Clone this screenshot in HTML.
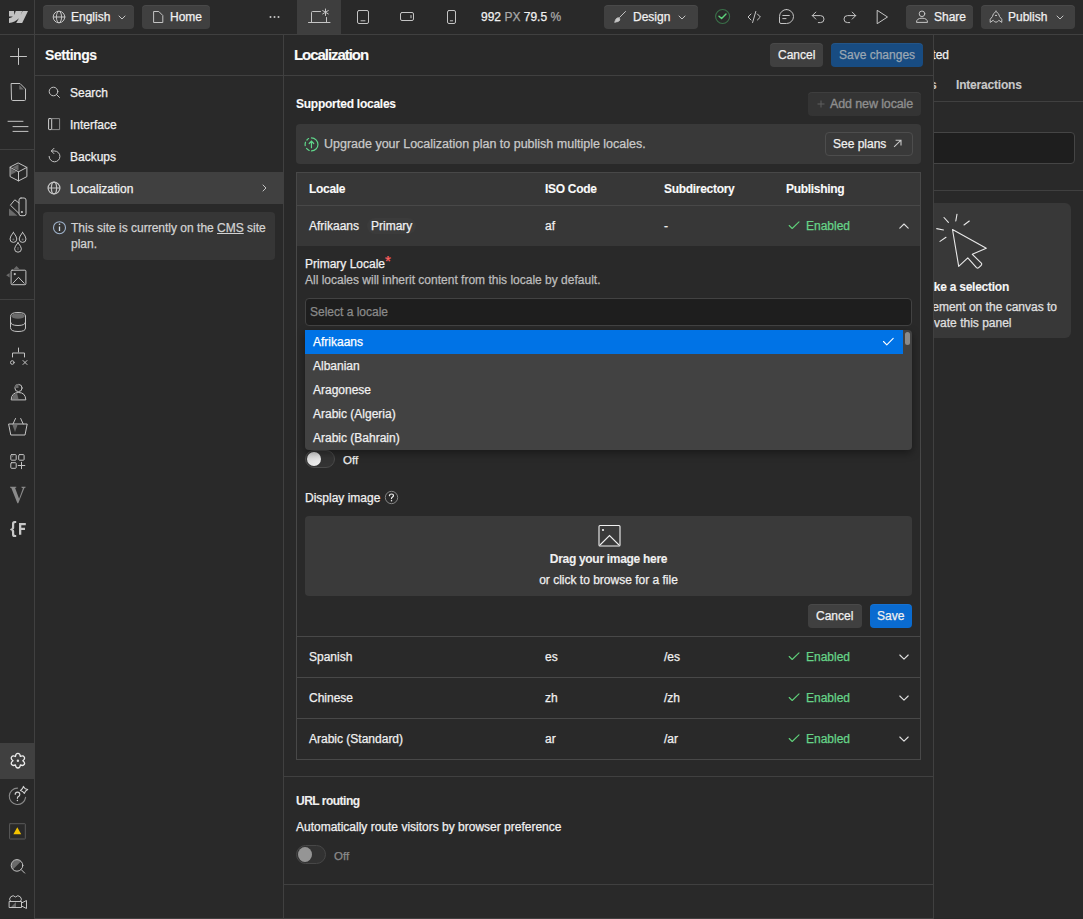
<!DOCTYPE html>
<html><head><meta charset="utf-8">
<style>
*{box-sizing:border-box;margin:0;padding:0}
html,body{width:1083px;height:919px;overflow:hidden;background:#292929;font-family:"Liberation Sans",sans-serif;font-size:12px;color:#f0f0f0}
.a{position:absolute}
svg{position:absolute;overflow:visible}
.ic{fill:none;stroke:#c4c4c4;stroke-width:1;stroke-linecap:round;stroke-linejoin:round}
.t{position:absolute;white-space:nowrap;line-height:16px;-webkit-text-stroke:0.25px currentColor}
.t.b{-webkit-text-stroke:0.1px currentColor}
.b{font-weight:bold}
.hl{background:#3a3a3a}
.btn{position:absolute;border-radius:4px;background:#404040;box-shadow:inset 0 1px 0 rgba(255,255,255,0.05)}
</style></head><body>
<!-- TOP BAR -->
<div class="a" style="left:0;top:0;width:1083px;height:34px;background:#292929"></div>
<div class="a" style="left:0;top:34px;width:1083px;height:1px;background:#404040"></div>
<div class="a" style="left:34px;top:0;width:1px;height:919px;background:#404040"></div>


<!-- TOPBAR CONTENT -->
<svg style="left:9px;top:11px" width="19" height="12" viewBox="0 0 19 12"><path fill="#c2c2c2" d="M0,0 H5 L5.4,3.9 L6.7,0 H13.2 L11.7,3.9 L13.6,0 H19 L13.2,12 H7.2 L10,7.2 Q6,11.3 0,12 V7.2 Q2.6,6.6 3.9,5.4 H0 Z"/></svg>
<div class="btn" style="left:43px;top:5px;width:91px;height:24px"></div>
<svg style="left:0;top:0" width="1" height="1"><g class="ic" stroke="#c8c8c8"><circle cx="59" cy="17" r="5.8"/><ellipse cx="59" cy="17" rx="2.6" ry="5.8"/><path d="M53.5,17 H64.5"/><path d="M119,16 L122,19 L125,16"/></g></svg>
<div class="t" style="left:71px;top:9px">English</div>
<div class="btn" style="left:142px;top:5px;width:68px;height:24px"></div>
<svg style="left:0;top:0" width="1" height="1"><g class="ic" stroke="#c8c8c8"><path d="M154,11.5 H158.8 L162.8,15.5 V22.5 H154 Z"/></g></svg>
<div class="t" style="left:170px;top:9px">Home</div>
<svg style="left:0;top:0" width="1" height="1"><g fill="#c8c8c8"><circle cx="270.5" cy="17" r="1"/><circle cx="274.5" cy="17" r="1"/><circle cx="278.5" cy="17" r="1"/></g></svg>
<div class="a" style="left:297px;top:0;width:44px;height:34px;background:#3e3e3e"></div>
<svg style="left:0;top:0" width="1" height="1"><g class="ic" stroke="#f0f0f0" stroke-width="1.1">
<path d="M308.5,22.5 H330"/><path d="M311.5,22.5 V12.5 Q311.5,11.5 312.5,11.5 H320.5"/><path d="M326.5,17.5 V22.5"/>
<path d="M325.5,9 V15.5 M322.7,10.6 L328.3,13.9 M322.7,13.9 L328.3,10.6"/></g>
<g class="ic" stroke="#c4c4c4" stroke-width="1.1"><rect x="357.5" y="10.5" width="11" height="13" rx="1.5"/><path d="M361,20.8 H365"/>
<rect x="400.5" y="12.5" width="13" height="8" rx="1.5"/><path d="M411,15.5 V17.8"/>
<rect x="447.5" y="10.5" width="8" height="13" rx="1.5"/><path d="M450.3,20.8 H452.7"/></g></svg>
<div class="t" style="left:481px;top:9px;font-size:12px"><span style="color:#f0f0f0">992</span> <span style="color:#a8a8a8">PX</span> <span style="color:#f0f0f0">79.5</span> <span style="color:#a8a8a8">%</span></div>
<div class="btn" style="left:604px;top:5px;width:94px;height:24px"></div>
<svg style="left:0;top:0" width="1" height="1"><g class="ic" stroke="#c8c8c8" stroke-width="1.2"><path d="M625.5,11.5 L619.5,17.5"/><path d="M615,22 Q615.5,18 618.5,17.8 Q620.5,18.5 619.5,20.5 Q618,22 615,22 Z" fill="#c8c8c8"/>
<path d="M679,16 L682,19 L685,16"/></g></svg>
<div class="t" style="left:633px;top:9px">Design</div>
<svg style="left:0;top:0" width="1" height="1"><circle cx="722.6" cy="16.5" r="7" fill="none" stroke="#3a7049" stroke-width="1.1"/><path d="M719,16.2 L721.6,18.6 L726,14" fill="none" stroke="#5ed47c" stroke-width="1.4" stroke-linecap="round" stroke-linejoin="round"/>
<g class="ic" stroke="#c4c4c4" stroke-width="1.1"><path d="M751,14 L748,17 L751,20"/><path d="M755.8,11.5 L752.6,22.5"/><path d="M757.4,14 L760.4,17 L757.4,20"/>
<path d="M786.5,9.5 A7,7 0 1 1 786.5,23.5 H781 Q779.5,23.5 779.5,22 V16.5 A7,7 0 0 1 786.5,9.5 Z"/><path d="M782.8,15.5 H789.3 M782.8,18.6 H786"/>
<path d="M812.3,15.6 H820.5 A3.5,3.5 0 0 1 820.5,22.6 H818.3 M815.8,12.1 L812.3,15.6 L815.8,19.1"/>
<path d="M855.7,15.6 H847.5 A3.5,3.5 0 0 0 847.5,22.6 H849.7 M852.2,12.1 L855.7,15.6 L852.2,19.1"/>
<path d="M877.5,10.5 L887.5,17 L877.5,23.5 Z"/></g></svg>
<div class="btn" style="left:906px;top:5px;width:67px;height:24px"></div>
<div class="btn" style="left:981px;top:5px;width:94px;height:24px"></div>
<svg style="left:0;top:0" width="1" height="1"><g class="ic" stroke="#c8c8c8" stroke-width="1.1"><circle cx="922" cy="13.8" r="2.8"/><path d="M916.5,22 Q916.5,18.2 922,18.2 Q927.5,18.2 927.5,22 Z"/>
<path d="M996,11.4 Q999.4,13.6 999.6,16.6 L1001.8,19.3 V22.4 L998.8,20.3 Q997.6,22.2 996,22.2 Q994.4,22.2 993.2,20.3 L990.2,22.4 V19.3 L992.4,16.6 Q992.6,13.6 996,11.4 Z"/><ellipse cx="996" cy="15.4" rx="1" ry="0.6" fill="#d0d0d0" stroke="none"/>
<path d="M1057,16 L1060,19 L1063,16"/></g></svg>
<div class="t" style="left:934px;top:9px">Share</div>
<div class="t" style="left:1008px;top:9px">Publish</div>

<!-- SETTINGS PANEL -->
<div class="a" style="left:35px;top:35px;width:248px;height:884px;background:#292929"></div>
<div class="a" style="left:283px;top:35px;width:1px;height:884px;background:#404040"></div>
<div class="a" style="left:35px;top:75px;width:248px;height:1px;background:#404040"></div>


<!-- RAIL -->
<div class="a" style="left:0;top:149px;width:34px;height:1px;background:#404040"></div>
<div class="a" style="left:0;top:299px;width:34px;height:1px;background:#404040"></div>
<div class="a" style="left:0;top:743px;width:34px;height:36px;background:#404040"></div>
<svg style="left:0;top:0" width="1" height="1"><g class="ic" stroke="#c8c8c8" stroke-width="1.1">
<path d="M18.5,48.5 V64.5 M10.5,56.5 H26.5"/>
<path d="M11.5,83.5 H20 L25.5,89 V99.5 Q25.5,100.5 24.5,100.5 H12.5 Q11.5,100.5 11.5,99.5 Z"/>
<path d="M8,121.3 H23 M13,126.6 H28 M13,131.4 H28"/>
<path d="M18.5,163.1 L26.9,167.4 V176.6 L18.5,180.9 L10.1,176.6 V167.4 Z M10.1,167.4 L18.5,171.8 L26.9,167.4 M18.5,171.8 V180.9"/>
<rect x="19" y="198" width="7" height="17.7" rx="2"/><path d="M19,203 L14.8,199.8 L10.4,205.2 L19,213.5"/>
<path d="M13.4,232.4 Q10,236.5 10,239 A3.4,3.4 0 0 0 16.8,239 Q16.8,236.5 13.4,232.4 Z"/>
<path d="M22.6,232.4 Q19.2,236.5 19.2,239 A3.4,3.4 0 0 0 26,239 Q26,236.5 22.6,232.4 Z"/>
<path d="M18,242.7 Q14.6,246.8 14.6,248.8 A3.4,3.4 0 0 0 21.4,248.8 Q21.4,246.8 18,242.7 Z"/>
<rect x="11.1" y="270.2" width="14.8" height="14.5" rx="1"/><path d="M12.8,283.3 L18.5,277.3 L24.2,283.3"/>
<path d="M10.5,316 Q10.5,312.5 18,312.5 Q25.5,312.5 25.5,316 V328 Q25.5,331.5 18,331.5 Q10.5,331.5 10.5,328 Z M10.5,322 Q10.5,325.5 18,325.5 Q25.5,325.5 25.5,322"/>
<path d="M18.5,348 V352 M12.5,357 V353 H24.5 V357"/><circle cx="12.3" cy="362.5" r="1.8"/><path d="M23,360.5 L27,364.5 M27,360.5 L23,364.5"/>
<circle cx="18.5" cy="388" r="3.6"/><path d="M11.2,399.5 Q11.5,392.5 18.5,392.5 Q25.5,392.5 25.8,399.5 Z"/>
<path d="M9,424 H27.2 L25,435 H11.2 Z M13,424 L15.5,418.5 M23.2,424 L20.7,418.5"/>
<rect x="10.8" y="454.6" width="5.4" height="5.6" rx="0.8"/><rect x="18.7" y="454.6" width="5.4" height="5.6" rx="0.8"/><rect x="10.8" y="462.7" width="5.4" height="5.6" rx="0.8"/><path d="M21.5,462.3 V468.7 M18.2,465.5 H24.8"/>
<circle cx="17.9" cy="760.7" r="1.2" stroke-width="0" fill="#e0e0e0"/>
<path d="M15.45,756.46 C15.82,752.36 19.98,752.36 20.35,756.46 C24.09,754.73 26.17,758.33 22.80,760.70 C26.17,763.07 24.09,766.67 20.35,764.94 C19.98,769.04 15.82,769.04 15.45,764.94 C11.71,766.67 9.63,763.07 13.00,760.70 C9.63,758.33 11.71,754.73 15.45,756.46 Z" stroke-width="1.3" stroke="#ececec"/>
<path d="M17.6,788.1 A8.2,8.2 0 1 0 25.6,797.4" stroke="#8a8a8a" stroke-width="1.1"/><path d="M15.2,794.3 Q15.3,792.2 17.5,792.2 Q19.8,792.2 19.8,794.4 Q19.8,795.8 18.3,796.6 Q17.4,797.2 17.4,798.3" stroke="#d0d0d0" stroke-width="1.2"/><circle cx="17.4" cy="800.5" r="0.7" fill="#d0d0d0" stroke="none"/><path d="M23.4,786.4 Q24.6,789 27.7,789.6 Q25,790.9 24.4,793.5 Q23.1,791.1 20.4,790.5 Q22.9,789.3 23.4,786.4 Z" stroke="#d0d0d0" stroke-width="1.1"/>
<rect x="9.6" y="823.7" width="15.7" height="15.3" rx="0.5" stroke="#5a5a5a"/>
<path d="M12.9,869.5 A5.8,5.8 0 0 1 21.1,861.3 Z" fill="#6a6a6a" stroke="none"/><circle cx="17" cy="865.4" r="5.8"/><path d="M21.2,869.6 L24.7,873.1"/>
<path d="M10.5,907.5 L16,902 V907.5 Z" fill="#6a6a6a" stroke="none"/><path d="M9.5,901.5 H21.5 V907.5 H9.5 Z M21.5,903 L26.5,900.5 V908.5 L21.5,906 M10.5,901.5 A2.8,2.8 0 0 1 15.5,897 A2.8,2.8 0 0 1 20.5,901.5"/>
</g>
<g fill="#6a6a6a" stroke="none">
<path d="M19.3,85 L23.8,89.6 H19.3 Z"/>
<path d="M18.5,164.3 L18.5,170.6 L12.2,167.4 Z"/><path d="M11,168.8 L16.5,171.8 L11,174.8 Z"/>
<path d="M9,208.5 V215.7 H17.5 Z"/>
<path d="M9.6,273 L6.2,275.2 L9.6,277.5 Z"/><path d="M13.5,269.3 L16.5,266 L19.5,269.3 Z"/>
<ellipse cx="18" cy="316" rx="6.8" ry="2.8"/>
<path d="M14.5,388 A4,4 0 0 1 18.5,384 V388 Z"/><path d="M12,399 Q12.5,394 17,393 L18.5,399 Z"/>
<path d="M12.5,425 H17.5 L15,432 Z"/>
<path d="M11.8,455.6 H14 L11.8,457.8 Z"/>
<circle cx="13.4" cy="239.5" r="1"/><circle cx="22.6" cy="239.5" r="1"/><rect x="17.5" y="247" width="1" height="3"/>
</g>
<circle cx="21.9" cy="212" r="1.1" fill="#c8c8c8"/>
<circle cx="14.8" cy="274.1" r="1.1" fill="#c8c8c8"/>
<path d="M17.3,827.2 L21.2,834.3 H13.4 Z" fill="#f5c400"/>
<path d="M10,486.7 H16.3 V487.6 L15.1,487.9 L19.1,498.8 L22.9,488.2 L21.4,487.6 V486.7 H25.6 V487.4 L24.4,488 L18.3,503.3 H17.4 L11.3,488 L10,487.4 Z" fill="#8a8a8a"/>
<path d="M19,523 H25.8 V525.2 H21.3 V527.7 H25 V529.9 H21.3 V534.8 H19 Z" fill="#c8c8c8"/><path d="M16.2,521 H14.6 Q12,521 12,523.6 V527.3 Q12,528.9 10.2,529.1 V530.1 Q12,530.3 12,531.9 V534.4 Q12,537 14.6,537 H16.2 V535.1 H15.2 Q14.2,535.1 14.2,534 V531.2 Q14.2,529.9 12.9,529.6 Q14.2,529.3 14.2,528 V524 Q14.2,522.9 15.2,522.9 H16.2 Z" fill="#c8c8c8"/>
</svg>

<!-- SETTINGS CONTENT -->
<div class="t b" style="left:45px;top:47px;font-size:14px;letter-spacing:-0.45px;color:#fafafa">Settings</div>
<div class="a" style="left:35px;top:172px;width:248px;height:32px;background:#404040"></div>
<svg style="left:0;top:0" width="1" height="1"><g class="ic" stroke="#c4c4c4" stroke-width="1.1">
<circle cx="53.5" cy="91.5" r="4.3"/><path d="M56.6,94.6 L59.5,97.5"/>
<rect x="48.6" y="118.6" width="3.1" height="11" rx="0.6" stroke="#d0d0d0"/><path d="M51.8,118.6 H59.6 V129.6 H51.8" stroke="#8a8a8a"/>
<path d="M51.4,151 H54.5 A5.4,5.4 0 1 1 49.1,156.4"/><path d="M54,148.3 L51.3,151 L53.9,153.6"/>
<circle cx="54" cy="188" r="5.9" stroke-width="1.2"/><ellipse cx="54" cy="188" rx="2.6" ry="5.9" stroke-width="1.2"/><path d="M48.3,188 H59.7" stroke-width="1.2"/>
<path d="M263,185 L266,188 L263,191"/>
</g></svg>
<div class="t" style="left:70px;top:85px">Search</div>
<div class="t" style="left:70px;top:117px">Interface</div>
<div class="t" style="left:70px;top:149px">Backups</div>
<div class="t" style="left:70px;top:181px">Localization</div>
<div class="a" style="left:43px;top:212px;width:232px;height:48px;background:#363636;border-radius:4px"></div>
<svg style="left:0;top:0" width="1" height="1"><circle cx="59.5" cy="227.7" r="6" fill="none" stroke="#9fb3cc" stroke-width="1.1"/><path d="M59.5,226.5 V231" stroke="#d0dcea" stroke-width="1.3"/><circle cx="59.5" cy="224.2" r="0.8" fill="#d0dcea"/></svg>
<div class="t" style="left:71px;top:220px;color:#d2d2d2;line-height:16px;white-space:normal;width:200px">This site is currently on the <span style="text-decoration:underline">CMS</span> site plan.</div>

<!-- RIGHT PANEL -->
<div id="rp" class="a" style="left:934px;top:35px;width:149px;height:884px;background:#292929;overflow:hidden">
<div class="t" style="right:134px;top:12px;color:#f0f0f0">Nothing selected</div>
<div class="t b" style="left:-43px;top:42px;color:#c8c8c8;letter-spacing:-0.25px">Settings</div>
<div class="t b" style="left:22px;top:42px;color:#c8c8c8;letter-spacing:-0.2px">Interactions</div>
<div class="a" style="left:0;top:66px;width:149px;height:1px;background:#404040"></div>
<div class="a" style="left:-100px;top:97px;width:241px;height:32px;background:#1e1e1e;border:1px solid #454545;border-radius:4px"></div>
<div class="a" style="left:0;top:155px;width:149px;height:1px;background:#404040"></div>
<div class="a" style="left:-80px;top:168px;width:217px;height:135px;background:#383838;border-radius:6px"></div>
<svg style="left:0;top:0" width="1" height="1"><g fill="none" stroke="#e8e8e8" stroke-width="1.1" stroke-linejoin="round" stroke-linecap="round" transform="translate(-934,-35)">
<path d="M952.5,229.5 L986.3,248.3 L972.3,254.3 L981.6,263.4 Q982,264.5 981,265.5 L978.5,267.8 Q977.5,268.5 976.5,267.6 L967.8,257.8 L958.7,266.3 Z"/>
<path d="M944,217.5 L948.4,222.4 M957,214.2 L955.8,221 M969.3,221 L964,225 M936.7,228.6 L943.5,230 M940,241.4 L946,237.3"/></g></svg>
<div class="t b" style="right:74px;top:244px;color:#f5f5f5;letter-spacing:-0.25px">Make a selection</div>
<div class="t" style="right:26px;top:264px;color:#e0e0e0">Select an element on the canvas to</div>
<div class="t" style="right:71.5px;top:280px;color:#e0e0e0">activate this panel</div>
</div>

<!-- LOCALIZATION PANEL -->
<div id="lp" class="a" style="left:284px;top:35px;width:649px;height:884px;background:#292929"></div>
<div class="a" style="left:933px;top:35px;width:1px;height:884px;background:#404040"></div>
<div class="a" style="left:284px;top:75px;width:649px;height:1px;background:#404040"></div>


<!-- LOCALIZATION CONTENT -->
<div class="t b" style="left:294px;top:47px;font-size:15px;letter-spacing:-1.05px;color:#fafafa">Localization</div>
<div class="btn" style="left:770px;top:43px;width:53px;height:24px"></div>
<div class="t" style="left:778px;top:47px">Cancel</div>
<div class="btn" style="left:831px;top:43px;width:92px;height:24px;background:#184c82"></div>
<div class="t" style="left:839px;top:47px;color:#9ba7b3">Save changes</div>

<div class="t b" style="left:296px;top:96px;font-size:12px;letter-spacing:-0.25px;color:#fafafa">Supported locales</div>
<div class="btn" style="left:808px;top:92px;width:113px;height:24px;background:#343434"></div>
<svg style="left:0;top:0" width="1" height="1"><path d="M821,100.5 V107.5 M817.5,104 H824.5" stroke="#5e5e5e" stroke-width="1"/></svg>
<div class="t" style="left:830px;top:96px;color:#8e8e8e;font-size:12.5px;letter-spacing:-0.12px;-webkit-text-stroke:0.35px #8e8e8e">Add new locale</div>

<div class="a" style="left:296px;top:124px;width:625px;height:40px;background:#393939;border-radius:4px"></div>
<svg style="left:0;top:0" width="1" height="1"><g fill="none" stroke="#5fd68a" stroke-width="1.2" stroke-linecap="round">
<path d="M311.45,137.9 A6.5,6.5 0 0 1 311.45,150.9"/>
<path d="M309.2,150.5 A6.5,6.5 0 0 1 306.5,148.4 M305.2,145.6 A6.5,6.5 0 0 1 305.5,142.2 M306.9,140 A6.5,6.5 0 0 1 308.6,138.6"/>
<path d="M311.45,147.7 V141.3 M309.2,143.5 L311.45,141.2 L313.7,143.5"/></g></svg>
<div class="t" style="left:324px;top:136px;font-size:12.5px;color:#c9c9c9">Upgrade your Localization plan to publish multiple locales.</div>
<div class="a" style="left:825px;top:132px;width:88px;height:24px;border:1px solid #4d4d4d;border-radius:4px"></div>
<div class="t" style="left:833px;top:136px">See plans</div>
<svg style="left:0;top:0" width="1" height="1"><path d="M894.1,146.8 L901,140.2 M895.6,140.2 H901 V145.6" fill="none" stroke="#c8c8c8" stroke-width="1.1"/></svg>

<!-- TABLE -->
<div class="a" style="left:296px;top:172px;width:625px;height:588px;border:1px solid #484848"></div>
<div class="a" style="left:297px;top:173px;width:623px;height:32px;background:#373737"></div>
<div class="a" style="left:297px;top:205px;width:623px;height:1px;background:#484848"></div>
<div class="a" style="left:297px;top:206px;width:623px;height:40px;background:#373737"></div>
<div class="t b" style="left:309px;top:181px;font-size:12px;letter-spacing:-0.3px;color:#fafafa">Locale</div>
<div class="t b" style="left:545px;top:181px;font-size:12px;letter-spacing:-0.3px;color:#fafafa">ISO Code</div>
<div class="t b" style="left:664px;top:181px;font-size:12px;letter-spacing:-0.3px;color:#fafafa">Subdirectory</div>
<div class="t b" style="left:786px;top:181px;font-size:12px;letter-spacing:-0.3px;color:#fafafa">Publishing</div>

<div class="t" style="left:309px;top:218px">Afrikaans</div>
<div class="a" style="left:367px;top:218px;width:49px;height:16px;border-radius:8px;background:#3b3b3b"></div>
<div class="t" style="left:371px;top:218px">Primary</div>
<div class="t" style="left:545px;top:218px">af</div>
<div class="t" style="left:664px;top:218px">-</div>
<svg style="left:0;top:0" width="1" height="1"><g fill="none" stroke="#5fd07a" stroke-width="1.1" stroke-linecap="round" stroke-linejoin="round">
<path d="M789.2,225.5 L792.2,228.5 L799,221.8"/><path d="M789.2,656.5 L792.2,659.5 L799,652.8"/><path d="M789.2,697.5 L792.2,700.5 L799,693.8"/><path d="M789.2,738.5 L792.2,741.5 L799,734.8"/></g>
<g fill="none" stroke="#e0e0e0" stroke-width="1.1" stroke-linecap="round" stroke-linejoin="round">
<path d="M899.8,228.2 L904,224 L908.2,228.2"/><path d="M899.8,655 L904,659.2 L908.2,655"/><path d="M899.8,696 L904,700.2 L908.2,696"/><path d="M899.8,737 L904,741.2 L908.2,737"/></g></svg>
<div class="t" style="left:806px;top:218px;color:#66d488">Enabled</div>

<!-- expanded -->
<div class="t" style="left:305px;top:255px">Primary Locale<span style="color:#ff5f5f;position:relative;top:-2px;font-size:15px">*</span></div>
<div class="t" style="left:305px;top:272px;color:#bdbdbd">All locales will inherit content from this locale by default.</div>
<div class="a" style="left:305px;top:298px;width:607px;height:28px;background:#1e1e1e;border:1px solid #424242;border-radius:4px"></div>
<div class="t" style="left:310px;top:304px;color:#8a8a8a">Select a locale</div>

<!-- toggle under dropdown -->
<div class="a" style="left:305px;top:450px;width:30px;height:18px;border-radius:9px;background:#333;border:1px solid #4a4a4a"></div>
<div class="a" style="left:307px;top:452px;width:14px;height:14px;border-radius:50%;background:linear-gradient(135deg,#d8d8d8,#f0f0f0)"></div>
<div class="t" style="left:343px;top:452px;font-size:11.5px">Off</div>

<!-- dropdown -->
<div class="a" style="left:305px;top:330px;width:607px;height:120px;background:#424242;border-radius:0 4px 4px 4px;overflow:hidden;box-shadow:0 3px 8px rgba(0,0,0,0.4)">
<div class="a" style="left:0;top:0;width:598px;height:24px;background:#0073e6"></div>
<div class="t" style="left:8px;top:4px;color:#fff">Afrikaans</div>
<div class="t" style="left:8px;top:28px">Albanian</div>
<div class="t" style="left:8px;top:52px">Aragonese</div>
<div class="t" style="left:8px;top:76px">Arabic (Algeria)</div>
<div class="t" style="left:8px;top:100px">Arabic (Bahrain)</div>
<div class="a" style="left:600px;top:2px;width:5px;height:13px;border-radius:3px;background:#8a8a8a"></div>
</div>
<svg style="left:0;top:0" width="1" height="1"><path d="M883.5,341.5 L886.8,344.8 L893.2,338.4" fill="none" stroke="#fff" stroke-width="1.1" stroke-linecap="round" stroke-linejoin="round"/></svg>

<div class="t" style="left:305px;top:490px">Display image</div>
<svg style="left:0;top:0" width="1" height="1"><circle cx="391.5" cy="497.5" r="6.2" fill="none" stroke="#858585" stroke-width="1"/><path d="M389.4,495.6 Q389.6,494 391.5,494 Q393.5,494 393.5,495.6 Q393.5,496.6 392.3,497.3 Q391.5,497.8 391.5,498.6" fill="none" stroke="#f0f0f0" stroke-width="1.2" stroke-linecap="round"/><circle cx="391.5" cy="500.7" r="0.75" fill="#f0f0f0"/></svg>
<div class="a" style="left:305px;top:516px;width:607px;height:80px;background:#3a3a3a;border-radius:4px"></div>
<svg style="left:0;top:0" width="1" height="1"><g fill="none" stroke="#f0f0f0" stroke-width="1.1"><rect x="599" y="525.5" width="21" height="20.5" rx="1"/><path d="M600,545 L609.5,535.5 L619,545"/></g><circle cx="603" cy="530" r="1.1" fill="#f0f0f0"/></svg>
<div class="t b" style="left:505px;top:551px;width:207px;text-align:center;font-size:12px;letter-spacing:-0.3px">Drag your image here</div>
<div class="t" style="left:505px;top:572px;width:207px;text-align:center">or click to browse for a file</div>
<div class="btn" style="left:808px;top:604px;width:54px;height:24px"></div>
<div class="t" style="left:816px;top:608px">Cancel</div>
<div class="btn" style="left:870px;top:604px;width:42px;height:24px;background:#0a6bd0"></div>
<div class="t" style="left:877px;top:608px">Save</div>

<div class="a" style="left:297px;top:636px;width:623px;height:1px;background:#484848"></div>
<div class="a" style="left:297px;top:677px;width:623px;height:1px;background:#484848"></div>
<div class="a" style="left:297px;top:718px;width:623px;height:1px;background:#484848"></div>
<div class="t" style="left:309px;top:649px">Spanish</div><div class="t" style="left:545px;top:649px">es</div><div class="t" style="left:664px;top:649px">/es</div><div class="t" style="left:806px;top:649px;color:#66d488">Enabled</div>
<div class="t" style="left:309px;top:690px">Chinese</div><div class="t" style="left:545px;top:690px">zh</div><div class="t" style="left:664px;top:690px">/zh</div><div class="t" style="left:806px;top:690px;color:#66d488">Enabled</div>
<div class="t" style="left:309px;top:731px">Arabic (Standard)</div><div class="t" style="left:545px;top:731px">ar</div><div class="t" style="left:664px;top:731px">/ar</div><div class="t" style="left:806px;top:731px;color:#66d488">Enabled</div>

<div class="a" style="left:284px;top:776px;width:649px;height:1px;background:#404040"></div>
<div class="t b" style="left:296px;top:793px;font-size:12px;letter-spacing:-0.5px">URL routing</div>
<div class="t" style="left:296px;top:819px">Automatically route visitors by browser preference</div>
<div class="a" style="left:296px;top:845px;width:30px;height:19px;border-radius:10px;background:#323232;border:1px solid #474747"></div>
<div class="a" style="left:298px;top:847px;width:14px;height:15px;border-radius:50%;background:#959595"></div>
<div class="t" style="left:334px;top:848px;color:#8a8a8a;font-size:11.5px">Off</div>
<div class="a" style="left:284px;top:884px;width:649px;height:1px;background:#404040"></div>

<div class="a" style="left:34px;top:918px;width:900px;height:1px;background:#404040"></div>
</body></html>
